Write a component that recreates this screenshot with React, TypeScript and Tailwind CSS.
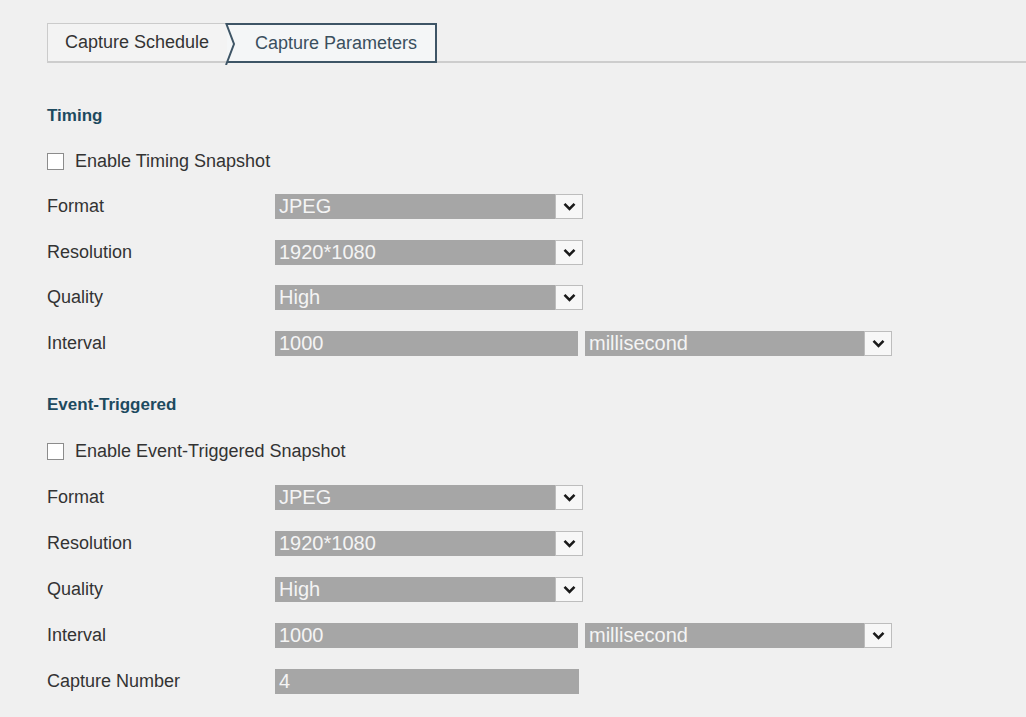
import React from 'react';

function Arrow() {
  return (
    <div className="flex h-full w-[28px] shrink-0 items-center justify-center border border-[#bdbdbd] bg-[#f7f7f7]">
      <svg width="13" height="9" viewBox="0 0 13 9">
        <polyline points="1.5,1.8 6.5,6.8 11.5,1.8" fill="none" stroke="#1a1a1a" strokeWidth="2.6" />
      </svg>
    </div>
  );
}

function Select({ value, width }: { value: string; width: string }) {
  return (
    <div className={`flex h-[25px] ${width} bg-[#a6a6a6]`}>
      <span className="flex-1 pl-[4px] text-[20px] leading-[25px] text-[#f4f4f4]">{value}</span>
      <Arrow />
    </div>
  );
}

function TextBox({ value, width }: { value: string; width: string }) {
  return (
    <div className={`h-[25px] ${width} bg-[#a6a6a6] pl-[4px] text-[20px] leading-[25px] text-[#f4f4f4]`}>
      {value}
    </div>
  );
}

function Row({ label, h, children }: { label: string; h: string; children: React.ReactNode }) {
  return (
    <div className={`flex ${h} items-center`}>
      <div className="w-[228px] text-[18px] text-[#333]">{label}</div>
      {children}
    </div>
  );
}

function Check({ label, h }: { label: string; h: string }) {
  return (
    <div className={`flex ${h} items-center`}>
      <span className="h-[17px] w-[17px] border border-[#8c8c8c] bg-white" />
      <span className="ml-[11px] text-[18px] text-[#333]">{label}</span>
    </div>
  );
}

function Section({ title, check, h, capture }: { title: string; check: string; h: string; capture?: boolean }) {
  return (
    <div>
      <div className={`flex ${h} items-center text-[17px] font-bold text-[#1d4a5f]`}>{title}</div>
      <Check label={check} h={h} />
      <Row label="Format" h={h}><Select value="JPEG" width="w-[308px]" /></Row>
      <Row label="Resolution" h={h}><Select value="1920*1080" width="w-[308px]" /></Row>
      <Row label="Quality" h={h}><Select value="High" width="w-[308px]" /></Row>
      <Row label="Interval" h={h}>
        <TextBox value="1000" width="w-[303px]" />
        <div className="ml-[7px]"><Select value="millisecond" width="w-[307px]" /></div>
      </Row>
      {capture && (
        <Row label="Capture Number" h={h}><TextBox value="4" width="w-[304px]" /></Row>
      )}
    </div>
  );
}

export default function App() {
  return (
    <div className="min-h-screen bg-[#f0f0f0] pt-[23px] pl-[47px] font-['Liberation_Sans',Arial,sans-serif]">
      <div className="flex h-[40px] border-b-2 border-[#cdcdcd]">
        <div className="flex w-[180px] items-center border-t border-l border-[#cbcbcb] bg-[#f3f3f3] pl-[17px] text-[18px] text-[#333]">
          Capture Schedule
        </div>
        <div className="relative -mb-[2px] flex w-[210px] items-center border-y-2 border-r-2 border-[#3e5566] bg-[#f4f6f7] pl-[28px] text-[18px] text-[#3a4f5e]">
          <svg className="absolute -left-[2px] -top-[2px]" width="12" height="42" viewBox="0 0 12 42">
            <polyline points="1,0 9,21 1,42" fill="none" stroke="#3e5566" strokeWidth="2" />
          </svg>
          Capture Parameters
        </div>
      </div>
      <div className="mt-[30px]">
        <Section title="Timing" check="Enable Timing Snapshot" h="h-[45.5px]" />
        <div className="mt-[16px]">
          <Section title="Event-Triggered" check="Enable Event-Triggered Snapshot" h="h-[46px]" capture />
        </div>
      </div>
    </div>
  );
}
